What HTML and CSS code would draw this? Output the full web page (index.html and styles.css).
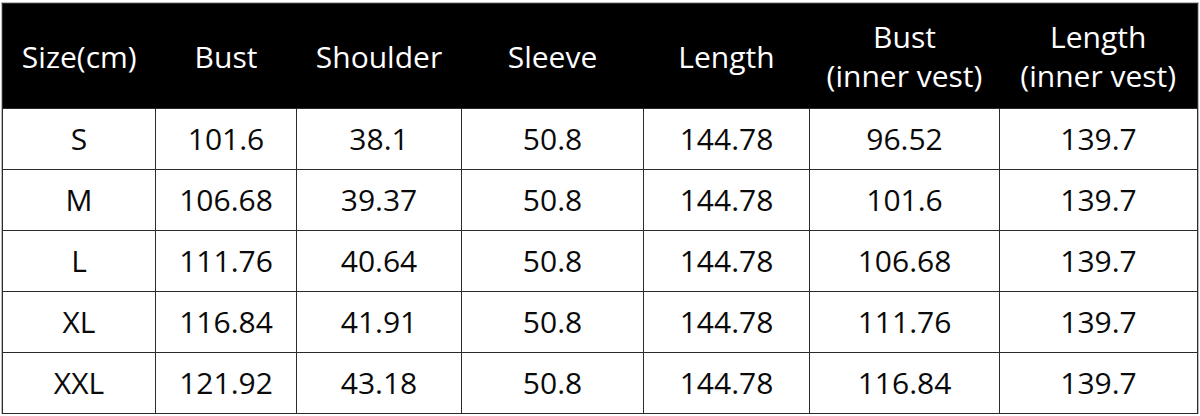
FILE: index.html
```html
<!DOCTYPE html>
<html lang="en">
<head>
<meta charset="utf-8">
<title>Size chart</title>
<link rel="stylesheet" href="styles.css">
</head>
<body>
<table class="size-table">
  <colgroup>
    <col class="c1"><col class="c2"><col class="c3"><col class="c4"><col class="c5"><col class="c6"><col class="c7">
  </colgroup>
  <thead>
    <tr>
      <th>Size(cm)</th>
      <th>Bust</th>
      <th>Shoulder</th>
      <th>Sleeve</th>
      <th>Length</th>
      <th>Bust<br>(inner vest)</th>
      <th>Length<br>(inner vest)</th>
    </tr>
  </thead>
  <tbody>
    <tr><td>S</td><td>101.6</td><td>38.1</td><td>50.8</td><td>144.78</td><td>96.52</td><td>139.7</td></tr>
    <tr><td>M</td><td>106.68</td><td>39.37</td><td>50.8</td><td>144.78</td><td>101.6</td><td>139.7</td></tr>
    <tr><td>L</td><td>111.76</td><td>40.64</td><td>50.8</td><td>144.78</td><td>106.68</td><td>139.7</td></tr>
    <tr><td>XL</td><td>116.84</td><td>41.91</td><td>50.8</td><td>144.78</td><td>111.76</td><td>139.7</td></tr>
    <tr><td>XXL</td><td>121.92</td><td>43.18</td><td>50.8</td><td>144.78</td><td>116.84</td><td>139.7</td></tr>
  </tbody>
</table>
</body>
</html>
```

FILE: styles.css
```css
html, body {
  margin: 0;
  padding: 0;
  background: #ffffff;
}

body {
  padding: 3px 3px 0 2px;
  font-family: "Open Sans", "Noto Sans", sans-serif;
}

.size-table {
  width: 1195px;
  table-layout: fixed;
  border-collapse: collapse;
  border: 1px solid #2b2b2b;
  outline: 1px solid #bdbdbd;
}

.c1 { width: 153px; }
.c2 { width: 141px; }
.c3 { width: 165px; }
.c4 { width: 182px; }
.c5 { width: 166px; }
.c6 { width: 190px; }
.c7 { width: 198px; }

.size-table th {
  background: #000000;
  color: #ffffff;
  font-weight: 400;
  font-size: 30px;
  line-height: 39px;
  height: 104px;
  padding: 0;
  text-align: center;
  vertical-align: middle;
  border: none;
}

.size-table td {
  color: #0a0a0a;
  font-size: 30px;
  line-height: 36px;
  height: 60px;
  padding: 0;
  text-align: center;
  vertical-align: middle;
  border: 1px solid #2b2b2b;
}
```
